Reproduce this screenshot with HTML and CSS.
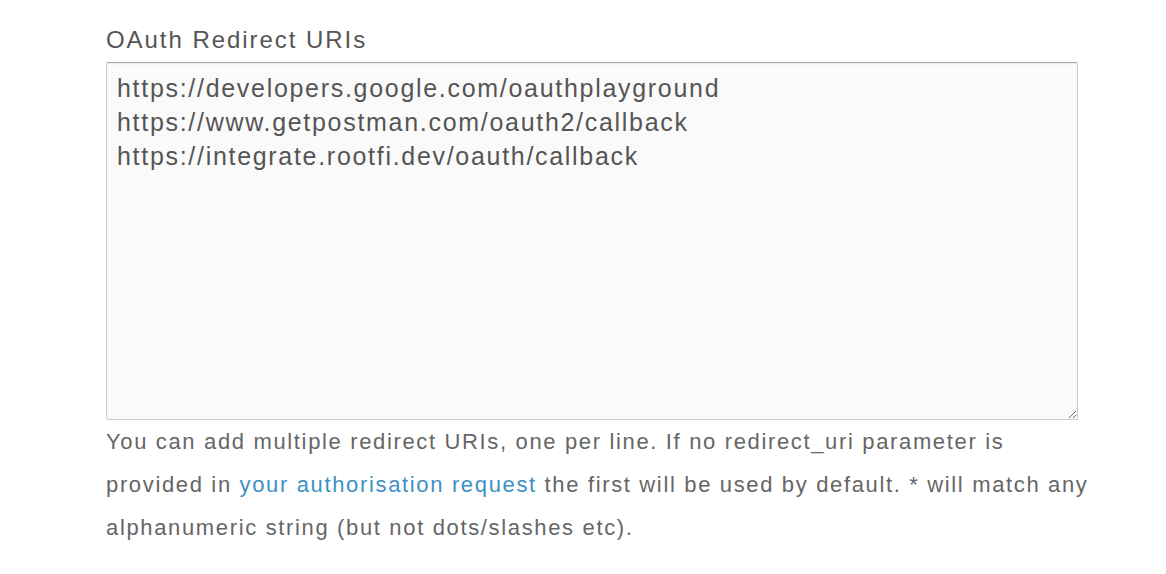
FILE: index.html
```html
<!DOCTYPE html>
<html>
<head>
<meta charset="utf-8">
<link rel="stylesheet" href="styles.css">
</head>
<body>
<div class="field">
  <label class="label" for="uris">OAuth Redirect URIs</label>
  <textarea id="uris" class="uris">https://developers.google.com/oauthplayground
https://www.getpostman.com/oauth2/callback
https://integrate.rootfi.dev/oauth/callback</textarea>
  <p class="help">You can add multiple redirect URIs, one per line. If no redirect_uri parameter is provided in <a href="#">your authorisation request</a> the first will be used by default. * will match any alphanumeric string (but not dots/slashes etc).</p>
</div>
</body>
</html>
```
FILE: styles.css
```css
html, body {
  margin: 0;
  background: #ffffff;
}
body {
  font-family: "Liberation Sans", Arial, Helvetica, sans-serif;
  color: #555555;
}
.field {
  display: flex;
  flex-direction: column;
  padding: 24px 0 0 106px;
  width: 1000px;
}
.label {
  font-size: 24px;
  line-height: 32px;
  letter-spacing: 1.95px;
  color: #555555;
  margin-bottom: 6px;
}
.uris {
  box-sizing: border-box;
  width: 972px;
  height: 358px;
  margin: 0;
  padding: 8px 10px;
  font-family: "Liberation Sans", Arial, Helvetica, sans-serif;
  font-size: 25px;
  line-height: 34px;
  letter-spacing: 1.7px;
  color: #555555;
  background: #fafafa;
  border: 1px solid #cccccc;
  border-top-color: #a9a9a9;
  border-radius: 2px;
  box-shadow: inset 0 1px 2px rgba(0,0,0,0.08);
  resize: vertical;
  outline: none;
}
.help {
  width: 996px;
  margin: 0;
  font-size: 22px;
  line-height: 43px;
  letter-spacing: 1.65px;
  color: #666666;
}
.help a {
  color: #3d91c6;
  text-decoration: none;
}
```
